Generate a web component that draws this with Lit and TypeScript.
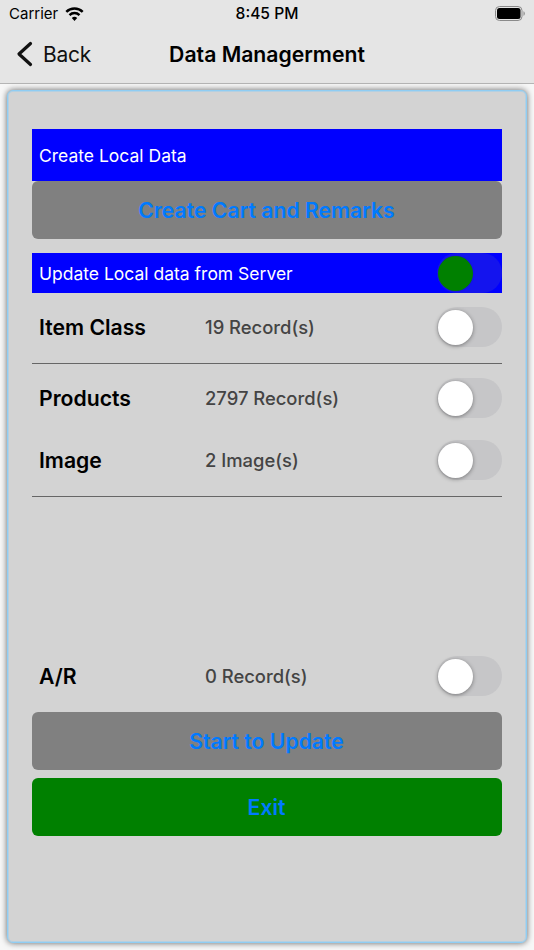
import { LitElement, html, css } from "lit";
import { customElement } from "lit/decorators.js";

@customElement("app-root")
export class AppRoot extends LitElement {
  static styles = css`
    :host { display: block; width: 534px; height: 950px; background: #f7f7f7; font-family: Inter, "Liberation Sans", sans-serif; color: #000; overflow: hidden; }
    .header { height: 83px; background: #e5e5e5; border-bottom: 1px solid #b5b5b5; display: flex; flex-direction: column; }
    .status { height: 28px; display: grid; grid-template-columns: 1fr auto 1fr; align-items: center; padding: 0 9px; font-size: 15px; }
    .status-left { display: flex; align-items: center; gap: 7px; }
    .status-right { display: flex; justify-content: flex-end; }
    .time { font-weight: 500; font-size: 15.6px; }
    .nav { height: 55px; display: grid; grid-template-columns: 1fr auto 1fr; align-items: center; padding-bottom: 2px; }
    .back { display: flex; align-items: center; gap: 10px; padding-left: 16px; font-size: 21px; letter-spacing: -0.3px; color: #111; }
    .title { font-size: 21.2px; font-weight: 600; }
    .card { box-sizing: border-box; margin: 6px 7px 0; height: 853px; background: #d3d3d3; border: 1px solid #8fcdf3; border-radius: 6px; padding: 38px 24px 0 24px; box-shadow: 0 0 6px rgba(0,0,0,0.6), inset 0 0 0 1px rgba(143,205,243,0.45); display: flex; flex-direction: column; }
    .blue { background: #0000ff; color: #fff; font-size: 17.5px; display: flex; align-items: center; padding-left: 7px; }
    .blue.a { height: 52px; }
    .blue.b { height: 40px; margin-top: 14px; }
    .btn { height: 58px; box-sizing: border-box; padding-right: 1px; border-radius: 6px; background: #808080; color: #007aff; font-size: 21.2px; font-weight: 600; display: flex; align-items: center; justify-content: center; }
    .green { background: #008000; margin-top: 8px; }
    .row { display: flex; align-items: center; height: 40px; padding-left: 7px; }
    .label { width: 166px; font-size: 21.2px; font-weight: 600; }
    .count { flex: 1; font-size: 18.4px; font-weight: 500; color: #444; }
    .sw { width: 65px; height: 40px; border-radius: 20px; background: #c6c6c8; position: relative; flex: none; }
    .knob { position: absolute; left: 1px; top: 3px; width: 35px; height: 35px; border-radius: 50%; background: #fff; box-shadow: 0 1px 4px rgba(0,0,0,0.4); }
    .blue .sw { margin-left: auto; background: #1414ee; }
    .blue .knob { background: #008000; box-shadow: 0 0 2px rgba(0,0,0,0.2); }
    hr { border: 0; height: 1px; background: #666; margin: 0; }
    .m14 { margin-top: 14px; }
    .m22 { margin-top: 22px; }
    .m159 { margin-top: 159px; }
    .m16 { margin-top: 16px; }
  `;

  private sw() { return html`<div class="sw"><div class="knob"></div></div>`; }

  private row(label: string, count: string, cls: string) {
    return html`<div class="row ${cls}"><div class="label">${label}</div><div class="count">${count}</div>${this.sw()}</div>`;
  }

  render() {
    return html`
      <div class="header">
        <div class="status">
          <div class="status-left"><span>Carrier</span>
            <svg width="19" height="14" viewBox="0 0 19 14"><path d="M1.300 4.900A11.800 11.800 0 0 1 17.700 4.900M4.500 8.100A7.300 7.300 0 0 1 14.500 8.100" fill="none" stroke="#000" stroke-width="2.500"/><path d="M9.500 13.900 6.800 11A3.900 3.900 0 0 1 12.200 11Z" fill="#000"/></svg>
          </div>
          <div class="time">8:45 PM</div>
          <div class="status-right">
            <svg width="30" height="15" viewBox="0 0 30 15"><rect x="0.500" y="0.500" width="26.500" height="14" rx="4" fill="none" stroke="#8a8a8a"/><rect x="2" y="2" width="23.500" height="11" rx="2.500" fill="#000"/><path d="M28.500 5.200v4.600c.8-.3 1.300-1.300 1.300-2.300s-.5-2-1.300-2.300z" fill="#8a8a8a"/></svg>
          </div>
        </div>
        <div class="nav">
          <div class="back">
            <svg width="17" height="26" viewBox="0 0 17 26"><path d="M14.500 2.500 3 13 14.500 23.500" fill="none" stroke="#111" stroke-width="3.200" stroke-linecap="round" stroke-linejoin="round"/></svg>
            <span>Back</span>
          </div>
          <div class="title">Data Managerment</div>
          <div></div>
        </div>
      </div>
      <div class="card">
        <div class="blue a">Create Local Data</div>
        <div class="btn">Create Cart and Remarks</div>
        <div class="blue b">Update Local data from Server${this.sw()}</div>
        ${this.row("Item Class", "19 Record(s)", "m14")}
        <hr class="m16" />
        ${this.row("Products", "2797 Record(s)", "m14")}
        ${this.row("Image", "2 Image(s)", "m22")}
        <hr class="m16" />
        ${this.row("A/R", "0 Record(s)", "m159")}
        <div class="btn m16">Start to Update</div>
        <div class="btn green">Exit</div>
      </div>
    `;
  }
}
